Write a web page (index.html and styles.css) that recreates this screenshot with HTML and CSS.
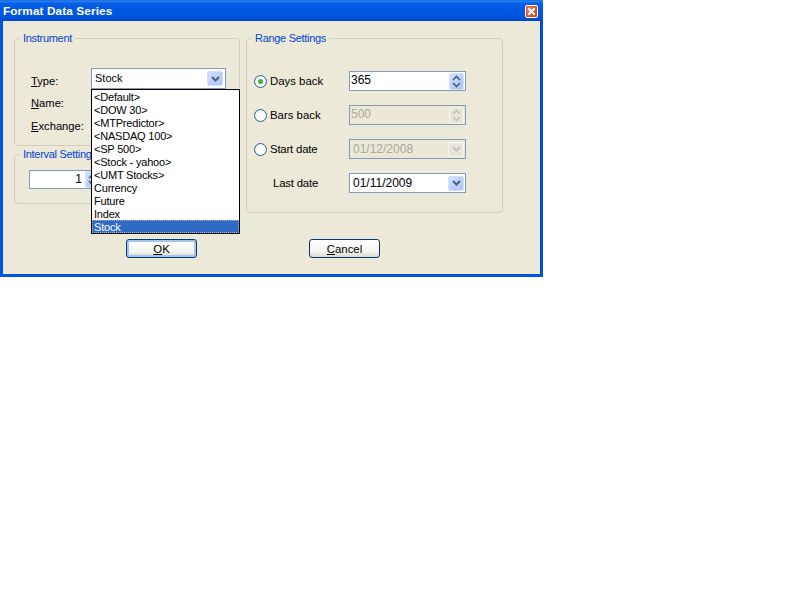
FILE: index.html
```html
<!DOCTYPE html>
<html lang="en">
<head>
<meta charset="utf-8">
<title>Format Data Series</title>
<link rel="stylesheet" href="styles.css">
</head>
<body>
<div class="window">
  <div class="titlebar">
    <span class="title">Format Data Series</span>
    <span class="close" aria-label="Close">
      <svg width="11" height="11" viewBox="0 0 11 11"><path d="M3 3 L8 8 M8 3 L3 8" stroke="#fff" stroke-width="2" stroke-linecap="square" fill="none"/></svg>
    </span>
  </div>
  <div class="client">
    <div class="groups">
      <div class="left-col">
        <fieldset class="group instrument">
          <legend>Instrument</legend>
          <div class="form-grid">
            <span class="lbl"><u>T</u>ype:</span>
            <div class="combo-anchor">
              <div class="field type-field">
                <span class="narrow">Stock</span>
                <span class="btn combo-btn"><svg width="9" height="6" viewBox="0 0 9 6"><path d="M1 1 L4.500 4.500 L8 1" class="chev"/></svg></span>
              </div>
              <ul class="dropdown">
                <li>&lt;Default&gt;</li>
                <li>&lt;DOW 30&gt;</li>
                <li>&lt;MTPredictor&gt;</li>
                <li>&lt;NASDAQ 100&gt;</li>
                <li>&lt;SP 500&gt;</li>
                <li>&lt;Stock - yahoo&gt;</li>
                <li>&lt;UMT Stocks&gt;</li>
                <li>Currency</li>
                <li>Future</li>
                <li>Index</li>
                <li class="selected">Stock</li>
              </ul>
            </div>
            <span class="lbl"><u>N</u>ame:</span>
            <span></span>
            <span class="lbl"><u>E</u>xchange:</span>
            <span></span>
          </div>
        </fieldset>
        <fieldset class="group interval">
          <legend>Interval Settings</legend>
          <div class="field interval-field"><span class="num">1</span>
            <span class="btn spin-btn"><svg width="9" height="13" viewBox="0 0 9 13"><path d="M1 5 L4.500 1.500 L8 5 M1 8 L4.500 11.500 L8 8" class="chev thin"/></svg></span>
          </div>
        </fieldset>
      </div>
      <fieldset class="group range">
        <legend>Range Settings</legend>
        <div class="range-rows">
          <div class="row">
            <span class="radio checked"></span><span class="row-lbl">Days back</span>
            <div class="field spin-field"><span>365</span>
              <span class="btn spin-btn"><svg width="9" height="13" viewBox="0 0 9 13"><path d="M1 5 L4.500 1.500 L8 5 M1 8 L4.500 11.500 L8 8" class="chev thin"/></svg></span>
            </div>
          </div>
          <div class="row">
            <span class="radio"></span><span class="row-lbl">Bars back</span>
            <div class="field spin-field disabled"><span>500</span>
              <span class="btn spin-btn"><svg width="9" height="13" viewBox="0 0 9 13"><path d="M1 5 L4.500 1.500 L8 5 M1 8 L4.500 11.500 L8 8" class="chev thin"/></svg></span>
            </div>
          </div>
          <div class="row">
            <span class="radio"></span><span class="row-lbl tight">Start date</span>
            <div class="field disabled date"><span>01/12/2008</span>
              <span class="btn combo-btn"><svg width="9" height="6" viewBox="0 0 9 6"><path d="M1 1 L4.500 4.500 L8 1" class="chev"/></svg></span>
            </div>
          </div>
          <div class="row">
            <span class="row-lbl last tight">Last date</span>
            <div class="field date"><span>01/11/2009</span>
              <span class="btn combo-btn"><svg width="9" height="6" viewBox="0 0 9 6"><path d="M1 1 L4.500 4.500 L8 1" class="chev"/></svg></span>
            </div>
          </div>
        </div>
      </fieldset>
    </div>
    <div class="actions">
      <button class="push default" type="button"><u>O</u>K</button>
      <button class="push" type="button"><u>C</u>ancel</button>
    </div>
  </div>
</div>
</body>
</html>
```
FILE: styles.css
```css
html, body {
  margin: 0;
  padding: 0;
  background: #fff;
}
body {
  font-family: "Liberation Sans", Arial, sans-serif;
  font-size: 12px;
  color: #000;
}
.window {
  width: 543px;
  height: 277px;
  box-sizing: border-box;
  display: flex;
  flex-direction: column;
  background: #0054e3;
}
.titlebar {
  height: 21px;
  flex: none;
  display: flex;
  align-items: center;
  justify-content: space-between;
  padding: 2px 5px 0 3px;
  box-sizing: border-box;
  background: linear-gradient(to bottom, #0a5cdc 0, #2f86f0 1px, #0a62e6 3px, #0058e4 8px, #0056e0 16px, #0048cc 21px);
}
.title {
  color: #fff;
  font-weight: bold;
  font-size: 11.8px;
  letter-spacing: 0.1px;
  margin-top: -2px;
}
.close {
  width: 11px;
  height: 11px;
  border: 1px solid #fff;
  border-radius: 2px;
  background: radial-gradient(circle at 35% 35%, #e8866a, #d9502a 60%, #c23a12);
  display: flex;
}
.client {
  flex: 1;
  margin: 0 3px 3px;
  background: #ece9d8;
  padding: 11px 0 0 11px;
  display: flex;
  flex-direction: column;
  box-shadow: 1px 0 0 #0040b8;
}
.groups {
  display: flex;
  gap: 6px;
  align-items: flex-start;
}
.left-col {
  width: 226px;
  display: flex;
  flex-direction: column;
  gap: 2px;
}
.group {
  margin: 0;
  padding: 0;
  min-width: 0;
  box-sizing: border-box;
  border: 1px solid #d0d0bf;
  border-radius: 4px;
}
.group legend {
  margin-left: 5px;
  padding: 0 3px;
  font-size: 11px;
  letter-spacing: -0.3px;
  line-height: 13px;
  color: #0046d5;
}
.instrument {
  height: 114px;
  position: relative;
  z-index: 2;
}
.interval {
  height: 56px;
}
.range {
  width: 257px;
  height: 181px;
}
.form-grid {
  display: grid;
  grid-template-columns: 60px 135px;
  grid-template-rows: 21px 23px 23px;
  align-items: center;
  margin: 23px 0 0 16px;
}
.form-grid .lbl {
  padding-top: 4px;
  font-size: 11.2px;
}
.combo-anchor {
  position: relative;
}
.field {
  box-sizing: border-box;
  width: 117px;
  height: 20px;
  border: 1px solid #7f9db9;
  background: #fff;
  display: flex;
  align-items: center;
  justify-content: space-between;
  padding: 0 1px 0 1px;
}
.field span:first-child {
  margin-top: -1px;
}
.spin-field span:first-child {
  margin-top: -3px;
}
.type-field {
  width: 135px;
  height: 21px;
  padding-left: 3px;
  padding-right: 2px;
}
.type-field .narrow {
  font-size: 11px;
  margin-top: 1px;
}
.date {
  padding-left: 3px;
}
.interval-field {
  width: 73px;
  height: 19px;
  margin: 9px 0 0 14px;
  padding-right: 1px;
}
.interval-field .num {
  margin-left: auto;
  margin-right: 3px;
  margin-top: 0;
}
.btn {
  box-sizing: border-box;
  width: 15px;
  height: 16px;
  border-radius: 2px;
  background: linear-gradient(135deg, #d5e2fb, #b9cdf7 60%, #aec4f4);
  border: 1px solid #d4e0f9;
  display: flex;
  align-items: center;
  justify-content: center;
  flex: none;
}
.spin-btn {
  height: 17px;
}
.combo-btn {
  height: 15px;
  width: 16px;
}
.chev {
  fill: none;
  stroke: #4d6185;
  stroke-width: 2;
}
.chev.thin {
  stroke-width: 1.700;
}
.disabled {
  background: #ebe8d8;
  color: #aca899;
}
.disabled .btn {
  background: #e8e6da;
  border-color: #f6f5ee;
}
.disabled .chev {
  stroke: #c4c3b8;
}
.dropdown {
  position: absolute;
  left: 0;
  top: 21px;
  width: 149px;
  box-sizing: border-box;
  margin: 0;
  padding: 0;
  list-style: none;
  background: #fff;
  border: 1px solid #000;
  z-index: 5;
}
.dropdown li {
  height: 13px;
  line-height: 15px;
  padding-left: 2px;
  font-size: 11px;
  letter-spacing: -0.2px;
  overflow: hidden;
}
.dropdown .selected {
  background: #316ac5;
  color: #fff;
  outline: 1px dotted #a9b8c8;
  outline-offset: -1px;
}
.range-rows {
  display: flex;
  flex-direction: column;
  gap: 14px;
  margin: 26px 0 0 7px;
}
.row {
  display: flex;
  align-items: center;
  height: 20px;
  font-size: 11.4px;
}
.row .field {
  font-size: 12px;
}
.radio {
  box-sizing: border-box;
  width: 13px;
  height: 13px;
  border-radius: 50%;
  border: 1px solid #2b5f8f;
  background: radial-gradient(circle at 60% 60%, #fff 40%, #dcdcd4 100%);
  flex: none;
  margin-right: 3px;
  display: flex;
  align-items: center;
  justify-content: center;
}
.radio.checked::after {
  content: "";
  width: 5px;
  height: 5px;
  border-radius: 50%;
  background: #3fb13f;
}
.row-lbl {
  width: 79px;
  flex: none;
}
.row-lbl.tight {
  letter-spacing: -0.2px;
}
.row-lbl.last {
  width: 76px;
  margin-left: 19px;
}
.actions {
  display: flex;
  gap: 112px;
  margin-top: 26px;
  margin-left: 112px;
}
.push {
  box-sizing: border-box;
  width: 71px;
  height: 19px;
  padding: 0;
  border: 1px solid #003c74;
  border-radius: 3px;
  background: linear-gradient(to bottom, #fff, #f4f4ee 70%, #dcd8ca);
  font-family: inherit;
  font-size: 11.4px;
  color: #000;
}
.push.default {
  box-shadow: inset 0 0 0 2px #a8c4ee;
}
```
